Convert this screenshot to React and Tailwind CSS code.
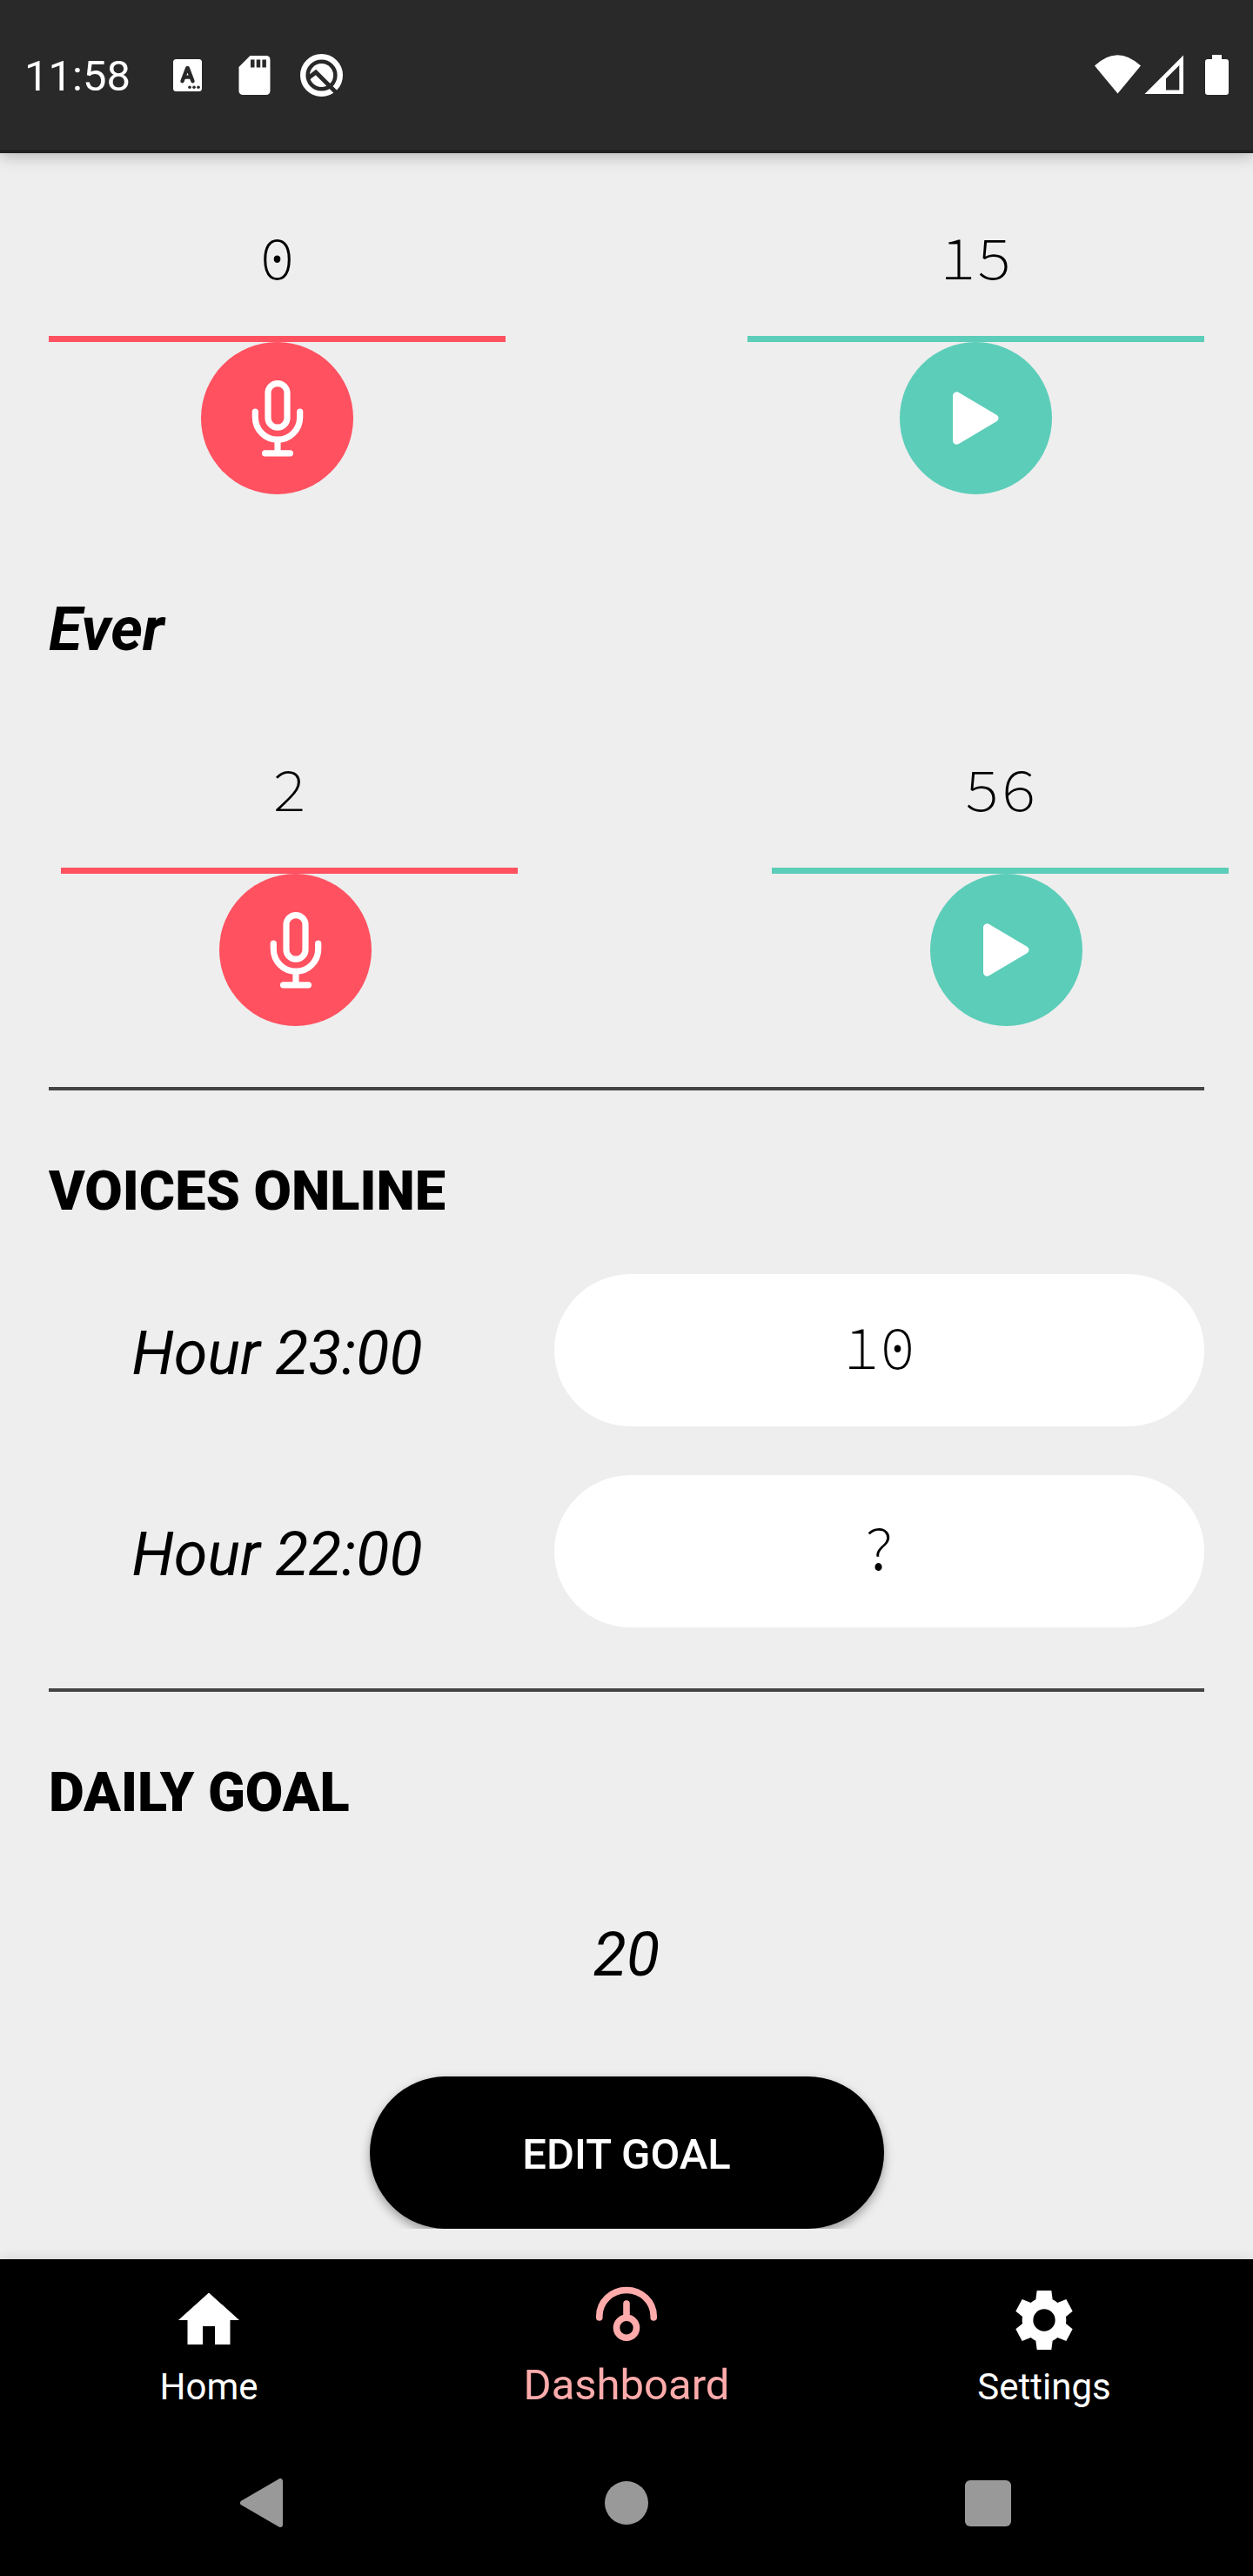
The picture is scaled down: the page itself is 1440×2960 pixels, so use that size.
import React from "react";

const MONO = "font-['Source_Code_Pro','Liberation_Mono',monospace]";

function MicIcon() {
  return (
    <svg className="h-22 w-15" viewBox="0 0 60 88" fill="none" stroke="#fff" strokeWidth="7.2" strokeLinecap="round" aria-hidden="true">
      <rect x="19" y="3.6" width="22" height="50.6" rx="11" />
      <path d="M4.3 36v6.5a25.7 25.7 0 0 0 51.4 0V36" />
      <path d="M30 68.4v15" strokeLinecap="butt" />
      <path d="M15.5 83.8h29" />
    </svg>
  );
}

function PlayIcon() {
  return (
    <svg className="h-[61px] w-[53px]" viewBox="0 0 53 61" fill="#fff" stroke="#fff" strokeWidth="9" strokeLinejoin="round" aria-hidden="true">
      <path d="M4.5 4.8v51.4L48 30.5z" />
    </svg>
  );
}

function Counter({ kind, value, wide }) {
  const mic = kind === "recorded";
  return (
    <div className={wide ? "flex w-[539px] flex-col" : "flex w-[525px] flex-col"}>
      <div className={`w-[525px] border-b-[7px] pb-[45px] text-center text-[70px] leading-[90px] font-light ${MONO} ${mic ? "border-[#ff5160]" : "border-[#5ccdb9]"}`}>
        {value}
      </div>
      <div className={`flex size-[175px] items-center justify-center self-center rounded-full ${mic ? "bg-[#ff5160]" : "bg-[#5ccdb9]"}`}>
        {mic ? <MicIcon /> : <PlayIcon />}
      </div>
    </div>
  );
}

function HourRow({ hour, value }) {
  return (
    <div className="flex items-center gap-14">
      <dt className="w-[525px] pt-1.5 text-center text-[70px] leading-[84px] italic">Hour {hour}</dt>
      <dd className={`flex h-[175px] flex-1 items-center justify-center rounded-full bg-white pb-2 text-[70px] leading-[90px] font-light ${MONO}`}>
        {value}
      </dd>
    </div>
  );
}

function StatusBar() {
  return (
    <header className="relative z-10 flex h-44 shrink-0 items-center justify-between border-b-4 border-[#202020] bg-[#292929] px-7 text-white shadow-[0_2px_18px_rgba(0,0,0,0.28)]">
      <div className="flex items-center gap-[34px]">
        <span className="pt-1 text-[49px] leading-[58px]">11:58</span>
        <div className="flex items-center gap-3.5">
          <svg className="size-[63px]" viewBox="0 0 63 63" aria-hidden="true">
            <rect x="15" y="13" width="33" height="37" rx="3.5" fill="#fff" />
            <path d="M25.5 38.3l5.7-15h.6l5.7 15M27.6 33.6h7.8" fill="none" stroke="#292929" strokeWidth="4.4" strokeLinecap="round" strokeLinejoin="round" />
            <g fill="#292929">
              <circle cx="34" cy="45.2" r="1.8" />
              <circle cx="39" cy="45.2" r="1.8" />
              <circle cx="44" cy="45.2" r="1.8" />
            </g>
          </svg>
          <svg className="size-[63px]" viewBox="0 0 63 63" aria-hidden="true">
            <path d="M26.5 9H45a4.5 4.5 0 0 1 4.5 4.5v36a4.5 4.5 0 0 1-4.5 4.5H18a4.5 4.5 0 0 1-4.5-4.5V22z" fill="#fff" />
            <path d="M27 13.5h4.5v9H27zM33.7 13.5h4.5v9h-4.5zM40.4 13.5h4.5v9h-4.5z" fill="#292929" />
          </svg>
          <svg className="size-[63px]" viewBox="-31.5 -31.5 63 63" aria-hidden="true">
            <circle r="21.3" fill="none" stroke="#fff" strokeWidth="6.4" />
            <circle r="13.6" fill="#fff" />
            <path d="M-15 3L-6.5-3.5L20 23" fill="none" stroke="#292929" strokeWidth="4.8" />
          </svg>
        </div>
      </div>
      <svg className="h-[46px] w-[154px]" viewBox="0 0 154 46" fill="#fff" aria-hidden="true">
        <path d="M0 12.5Q26-12 53 12.5L26.5 44.5z" />
        <path fillRule="evenodd" d="M102 .5V45H57.500zM97.3 12L82 27.3V40.500H97.3z" />
        <path d="M135 0h11v5h5a3 3 0 0 1 3 3v35a3 3 0 0 1-3 3h-21a3 3 0 0 1-3-3V8a3 3 0 0 1 3-3h5z" />
      </svg>
    </header>
  );
}

function Tab({ label, active, children }) {
  return (
    <a href="#" aria-current={active ? "page" : undefined} className={`flex flex-1 flex-col items-center gap-2.5 pt-7 ${active ? "text-[#ffabab]" : "text-white"}`}>
      <svg className="size-21" viewBox="-42 -42 84 84" fill="currentColor" aria-hidden="true">
        {children}
      </svg>
      <span className={active ? "text-[49px] leading-[46px]" : "text-[42px] leading-[50px]"}>{label}</span>
    </a>
  );
}

function BottomBars() {
  return (
    <footer className="relative z-10 shrink-0 bg-black shadow-[0_0_14px_rgba(0,0,0,0.12)]">
      <nav className="flex h-49" aria-label="Main">
        <Tab label="Home">
          <path d="M-7 28V7H7v21h17.5V0H35L0-31.5-35 0h10.5v28z" />
        </Tab>
        <Tab label="Dashboard" active>
          <g fill="none" stroke="currentColor" strokeWidth="7.6" strokeLinecap="round">
            <path d="M-31.2-3v-1.5a31.2 30 0 0 1 62.4 0V-3" />
            <path d="M0-19V-3" />
            <circle cy="8.7" r="11.5" />
          </g>
        </Tab>
        <Tab label="Settings">
          <path
            transform="scale(.3333)"
            fillRule="evenodd"
            d="M-25-102H25L29-71Q39-66 46-60L76-72 98-31 75-12Q77 0 75 12L98 31 76 72 46 60Q39 66 29 71L25 102H-25L-29 71Q-39 66-46 60L-76 72-98 31-75 12Q-77 0-75-12L-98-31-76-72-46-60Q-39-66-29-71zM0-38A38 38 0 1 0 0 38A38 38 0 1 0 0-38z"
          />
        </Tab>
      </nav>
      <div className="grid h-42 grid-cols-3 items-center justify-items-center px-[97px]">
        <button type="button" aria-label="Back">
          <svg className="size-21" viewBox="0 0 84 84" fill="#999" stroke="#999" strokeWidth="6" strokeLinejoin="round" aria-hidden="true">
            <path d="M16 42L59 17v50z" />
          </svg>
        </button>
        <button type="button" aria-label="Home screen" className="size-[50px] rounded-full bg-[#999]" />
        <button type="button" aria-label="Recent apps" className="size-[53px] rounded-md bg-[#999]" />
      </div>
    </footer>
  );
}

export default function App() {
  return (
    <div className="flex min-h-screen flex-col bg-[#eee] font-[Roboto,sans-serif] text-black">
      <StatusBar />
      <main className="flex flex-1 flex-col pt-[75px] pb-[35px]">
        <div className="flex justify-between px-14">
          <Counter kind="recorded" value="0" />
          <Counter kind="listened" value="15" />
        </div>

        <h3 className="mt-[113px] px-14 text-[70px] leading-[84px] font-bold italic">Ever</h3>
        <div className="mt-[97px] flex justify-between pr-3.5 pl-[70px]">
          <Counter kind="recorded" value="2" wide />
          <Counter kind="listened" value="56" wide />
        </div>

        <hr className="mx-14 mt-[70px] border-t-4 border-[#444]" />
        <h2 className="mt-[78px] px-14 text-[63px] leading-[76px] font-black">VOICES ONLINE</h2>
        <dl className="mt-[57px] flex flex-col gap-14 px-14">
          <HourRow hour="23:00" value="10" />
          <HourRow hour="22:00" value="?" />
        </dl>

        <hr className="mx-14 mt-[70px] border-t-4 border-[#444]" />
        <h2 className="mt-[78px] px-14 text-[63px] leading-[76px] font-black">DAILY GOAL</h2>
        <p className="mt-[106px] text-center text-[70px] leading-[84px] italic">20</p>
        <div className="mt-[78px] flex justify-center overflow-hidden pt-5">
          <button type="button" className="h-[175px] w-[591px] rounded-full bg-black pt-1 text-[49px] leading-[58px] font-medium text-white shadow-[0_5px_12px_rgba(0,0,0,0.35)]">
            EDIT GOAL
          </button>
        </div>
      </main>
      <BottomBars />
    </div>
  );
}
